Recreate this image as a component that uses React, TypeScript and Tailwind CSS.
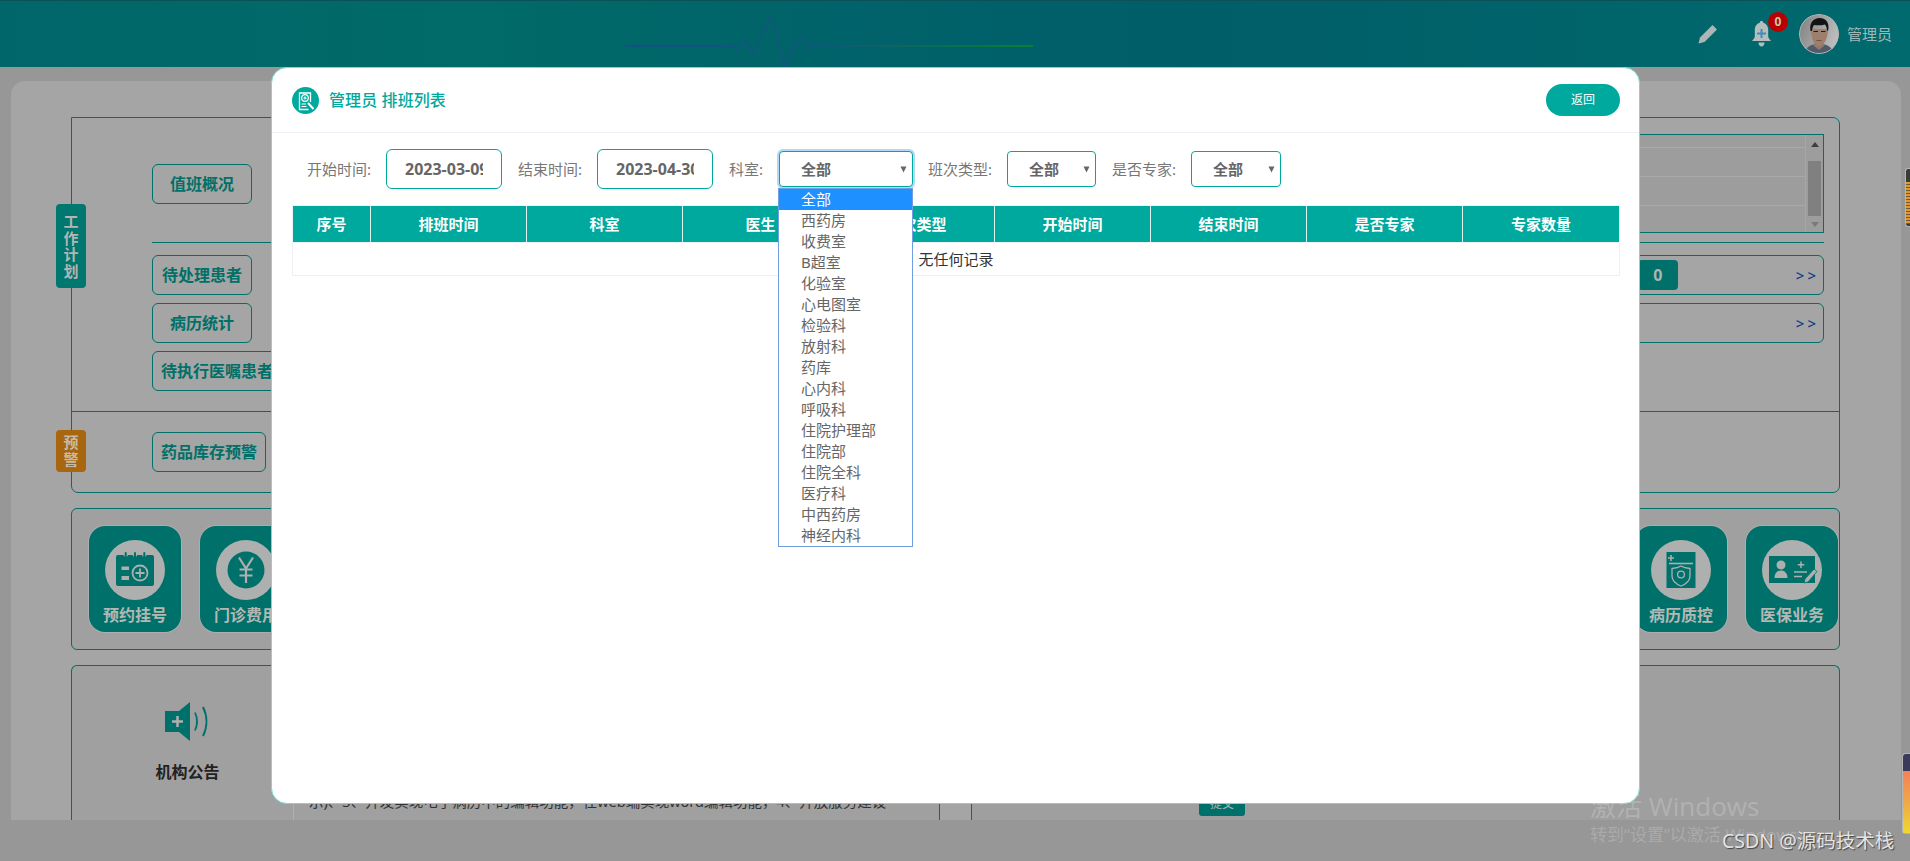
import React from "react";

const departments = ["全部","西药房","收费室","B超室","化验室","心电图室","检验科","放射科","药库","心内科","呼吸科","住院护理部","住院部","住院全科","医疗科","中西药房","神经内科"];
const columns = ["序号","排班时间","科室","医生","班次类型","开始时间","结束时间","是否专家","专家数量"];

function Caret() {
  return (
    <svg width="7" height="7" viewBox="0 0 7 7" className="absolute right-[5px] top-[14px]">
      <path d="M0.5 0.5H6.5L3.5 6.5Z" fill="#666" />
    </svg>
  );
}

function SideButton({ label, wide }: { label: string; wide?: boolean }) {
  return (
    <div className={`${wide ? "px-[8px] w-fit whitespace-nowrap" : "w-[100px]"} h-[40px] shrink-0 flex items-center justify-center rounded-[6px] border border-[#007068] text-[16px] font-bold text-[#007068]`}>
      {label}
    </div>
  );
}

function Calendar() {
  return (
    <svg viewBox="0 0 60 60" className="w-[60px] h-[60px]">
      <path d="M13 15h34a2 2 0 0 1 2 2v27a2 2 0 0 1-2 2H13a2 2 0 0 1-2-2V17a2 2 0 0 1 2-2z" fill="#00706a" />
      <g fill="#adb0ae"><circle cx="20.7" cy="14.5" r="2.4" /><circle cx="30" cy="14.5" r="2.4" /><circle cx="39.3" cy="14.5" r="2.4" /></g>
      <g fill="#00706a"><rect x="19.7" y="12" width="2" height="6" rx="1" /><rect x="29" y="12" width="2" height="6" rx="1" /><rect x="38.3" y="12" width="2" height="6" rx="1" /></g>
      <rect x="16.5" y="26.5" width="7.5" height="3.5" fill="#adb0ae" />
      <rect x="16.5" y="36" width="7.5" height="4" fill="#adb0ae" />
      <circle cx="35" cy="33" r="7.5" fill="none" stroke="#adb0ae" strokeWidth="1.8" />
      <path d="M35 28.5v9M30.5 33h9" stroke="#adb0ae" strokeWidth="1.8" />
    </svg>
  );
}

function Yen() {
  return (
    <svg viewBox="0 0 60 60" className="w-[60px] h-[60px]">
      <circle cx="30" cy="30" r="18.5" fill="#00706a" />
      <path d="M23 17.5l7 11 7-11M30 28.5V43M23.5 29.5h13M23.5 35.5h13" fill="none" stroke="#adb0ae" strokeWidth="2.2" />
    </svg>
  );
}

function ShieldDoc() {
  return (
    <svg viewBox="0 0 60 60" className="w-[60px] h-[60px]">
      <rect x="15.5" y="12" width="29" height="36" fill="#00706a" />
      <path d="M20 15v6M17 18h6" stroke="#adb0ae" strokeWidth="1.6" />
      <path d="M18 23.5h24" stroke="#adb0ae" strokeWidth="1.6" />
      <path d="M30 26c3 1.8 6 2.2 9 2.5v7.5c0 4.5-4 8-9 10-5-2-9-5.5-9-10v-7.5c3-.3 6-.7 9-2.5z" fill="none" stroke="#adb0ae" strokeWidth="1.3" />
      <circle cx="30" cy="34.5" r="3.4" fill="none" stroke="#adb0ae" strokeWidth="1.3" />
    </svg>
  );
}

function IdCard() {
  return (
    <svg viewBox="0 0 60 60" className="w-[60px] h-[60px]">
      <rect x="7" y="16" width="46" height="27" fill="#00706a" />
      <circle cx="19" cy="25" r="4.5" fill="#adb0ae" />
      <path d="M12.5 38c0-5 3-7.5 6.5-7.5s6.5 2.500 6.500 7.500z" fill="#adb0ae" />
      <path d="M39 21.500v6.500M35.800 24.800h6.500M32 32h13M32 36.500h8" stroke="#adb0ae" strokeWidth="1.5" />
      <path d="M42 43l1-4 9-10 3 2.500-9 10.500z" fill="#adb0ae" stroke="#00706a" strokeWidth="0.8" />
    </svg>
  );
}

function Tile({ label, children }: { label: string; children: React.ReactNode }) {
  return (
    <div className="w-[92px] h-[106px] shrink-0 rounded-[16px] bg-[#00706a] shadow-[0_0_0_1px_#adadad] flex flex-col items-center pt-[14px]">
      <div className="w-[60px] h-[60px] rounded-full bg-[#adb0ae]">{children}</div>
      <div className="mt-[3px] text-[16px] leading-[24px] font-bold text-[#b4b8b5] whitespace-nowrap">{label}</div>
    </div>
  );
}

function Speaker() {
  return (
    <svg width="45" height="39" viewBox="0 0 45 39">
      <path d="M0 9h14L25 0v39L14 30H0z" fill="#00706a" />
      <path d="M12.500 14v11M7 19.500h11" stroke="#adb0ae" strokeWidth="2.500" />
      <path d="M30 10.500c2.500 5.500 2.500 12.500 0 18" fill="none" stroke="#00706a" strokeWidth="1.800" />
      <path d="M38 5c4.500 9 4.500 20 0 29" fill="none" stroke="#00706a" strokeWidth="2" />
    </svg>
  );
}

function Pencil() {
  return (
    <svg width="20" height="20" viewBox="0 0 20 20">
      <path d="M0.500 19.500l1.500-6L14.500 1l4.500 4.500L6.500 18z" fill="#adb5b5" />
    </svg>
  );
}

function Bell() {
  return (
    <svg width="19" height="26" viewBox="0 0 19 26">
      <path d="M9.500 0c1.100 0 1.700.7 1.700 1.700 3.500 1 5 4 5 7.500v6c0 2 1.500 3 2.800 4.800H0c1.300-1.800 2.800-2.800 2.800-4.800v-6c0-3.500 1.500-6.500 5-7.500C7.800.7 8.400 0 9.500 0z" fill="#b5bdbd" />
      <path d="M6.500 21.500h6c0 2.500-1.500 4-3 4s-3-1.500-3-4z" fill="#b5bdbd" />
      <path d="M9.500 8v9M5 12.500h9" stroke="#3a8fbf" strokeWidth="2" />
    </svg>
  );
}

function Avatar() {
  return (
    <svg width="40" height="40" viewBox="0 0 40 40" className="rounded-full">
      <defs>
        <linearGradient id="avBg" x1="0" y1="0" x2="1" y2="0.4">
          <stop offset="0" stopColor="#7f7f7f" />
          <stop offset="1" stopColor="#bcbcbc" />
        </linearGradient>
      </defs>
      <circle cx="20" cy="20" r="20" fill="url(#avBg)" />
      <g className="blur-[0.4px]">
        <path d="M5 41c1-8 7-11 15-11s14 3 15 11z" fill="#4f5b6b" />
        <path d="M15 26h10v6l-5 4-5-4z" fill="#94786a" />
        <path d="M12 15c0 9 3 17 8 17s9-8 9-17z" fill="#9c7f6d" />
        <path d="M11.500 17c-1.500-8 3-13 9-13s10 4 8.800 12l-1.300 1c0-3-.8-5-2-6.500-3.500 1-7.500 1-11 .500-1.200 1.500-1.700 3.500-2 6z" fill="#141414" />
        <path d="M14.500 17.500h4.500M22 17.500h4.500" stroke="#1c1c1c" strokeWidth="1.200" />
        <path d="M17.500 26.500h5" stroke="#67493d" strokeWidth="0.800" />
      </g>
      <circle cx="20" cy="20" r="19.500" fill="none" stroke="#b4b4b4" />
    </svg>
  );
}

function TitleIcon() {
  return (
    <svg width="27" height="27" viewBox="0 0 27 27" className="shrink-0">
      <circle cx="13.500" cy="13.500" r="13.500" fill="#00a99d" />
      <path d="M18.500 15V6H7.500v16.500h9" fill="none" stroke="#fff" strokeWidth="1.300" />
      <circle cx="13" cy="11" r="3.300" fill="none" stroke="#fff" strokeWidth="1.200" />
      <path d="M13 9.300v3.400M11.300 11h3.400" stroke="#fff" strokeWidth="1" />
      <path d="M9.500 17h4.500M9.500 19.500h5" stroke="#fff" strokeWidth="1" />
      <path d="M16 16l5.500 6" stroke="#fff" strokeWidth="2" />
    </svg>
  );
}

function DateField({ value }: { value: string }) {
  return (
    <input
      readOnly
      value={value}
      className="w-[116px] h-[40px] shrink-0 pl-[18px] pr-[18px] rounded-[6px] border border-[#00a99d] text-[16px] font-bold text-[#666] bg-white outline-none"
    />
  );
}

function SelectBox({ width, focused }: { width: string; focused?: boolean }) {
  return (
    <div className={`${width} relative h-[36px] shrink-0 flex items-center pl-[21px] rounded-[4px] border border-[#00a99d] bg-white text-[15px] font-bold text-[#666] ${focused ? "shadow-[0_0_0_2px_#b2d8f5]" : ""}`}>
      全部
      <Caret />
    </div>
  );
}

export default function App() {
  return (
    <div className="relative w-[1910px] h-[861px] overflow-hidden bg-[#979797] font-['Noto_Sans','Noto_Sans_CJK_SC',sans-serif]">
      {/* top bar */}
      <header className="relative h-[67px] border-t border-[#0b5157] bg-[linear-gradient(90deg,#00666a_0%,#006b68_25%,#00626a_45%,#005e68_62%,#00626a_78%,#006a6e_100%)] flex items-center justify-end pr-[18px]">
        <svg width="420" height="60" viewBox="0 0 420 60" className="absolute left-[620px] top-[6px]">
          <defs>
            <linearGradient id="ecg" x1="0" y1="0" x2="1" y2="0">
              <stop offset="0" stopColor="#1b4a8c" />
              <stop offset="0.5" stopColor="#14557f" />
              <stop offset="1" stopColor="#0a8a20" />
            </linearGradient>
          </defs>
          <path d="M5 39H115l3 4 7-10 9 14 8-19 9-19 7 25 7 25 10-20 7-10 6 14 7-8 7 6 10-2H413" fill="none" stroke="url(#ecg)" strokeWidth="1.300" />
        </svg>
        <Pencil />
        <div className="relative ml-[34px] h-[26px]">
          <Bell />
          <span className="absolute left-[16px] top-[-9px] w-[20px] h-[20px] rounded-full bg-[#b80000] flex items-center justify-center text-[12px] font-bold text-[#c9c9a8]">0</span>
        </div>
        <div className="ml-[28px] mb-[1px] w-[40px] h-[40px]"><Avatar /></div>
        <span className="ml-[8px] text-[15px] text-[#9db8b8]">管理员</span>
      </header>

      {/* dimmed dashboard */}
      <main className="mt-[14px] ml-[11px] w-[1890px] h-[739px] overflow-hidden rounded-t-[14px] bg-[#a5a5a5] pt-[36px] pl-[60px]">
        <section className="relative w-[1769px] h-[376px] border border-[#007068] rounded-[7px] rounded-tl-none">
          <div className="relative h-[294px] border-b border-[#007068] pl-[80px] pr-[15px]">
            <div className="absolute left-[-16px] top-[86px] w-[30px] h-[84px] rounded-[4px] bg-[#00776f] px-[7px] flex items-center text-center text-[15px] leading-[16.5px] font-bold text-[#b5b5b5] break-all">
              工作计划
            </div>
            <div className="h-[125px] border-b border-[#007068] flex">
              <div className="mt-[46px]"><SideButton label="值班概况" /></div>
              <div className="ml-[50px] mt-[16px] h-[99px] flex-1 border border-[#007068] bg-[#9d9d9d] flex">
                <div className="flex-1">
                  <div className="h-[13px] border-b border-[#a9a9a9]" />
                  <div className="h-[29px] border-b border-[#a9a9a9]" />
                  <div className="h-[29px] border-b border-[#a9a9a9]" />
                </div>
                <div className="relative w-[18px] border-l border-[#a6a6a6]">
                  <svg width="8" height="5" viewBox="0 0 8 5" className="absolute left-[5px] top-[7px]"><path d="M0 5L4 0l4 5z" fill="#3e3e3e" /></svg>
                  <div className="absolute left-[2px] top-[26px] w-[13px] h-[55px] bg-[#808080]" />
                  <svg width="8" height="5" viewBox="0 0 8 5" className="absolute left-[5px] top-[87px]"><path d="M0 0L4 5l4-5z" fill="#7a7a7a" /></svg>
                </div>
              </div>
            </div>
            <div className="pt-[12px] flex flex-col gap-[8px]">
              <div className="flex">
                <SideButton label="待处理患者" />
                <div className="ml-[49px] h-[40px] flex-1 rounded-[6px] border border-[#007068] flex items-center justify-end gap-[118px] pr-[4px]">
                  <div className="w-[40px] h-[30px] rounded-[4px] bg-[#00706a] flex items-center justify-center text-[16px] font-bold text-[#adb5b0]">0</div>
                  <span className="text-[15px] font-medium tracking-[3px] text-[#0a3a8a]">&gt;&gt;</span>
                </div>
              </div>
              <div className="flex">
                <SideButton label="病历统计" />
                <div className="ml-[49px] h-[40px] flex-1 rounded-[6px] border border-[#007068] flex items-center justify-end pr-[4px]">
                  <span className="text-[15px] font-medium tracking-[3px] text-[#0a3a8a]">&gt;&gt;</span>
                </div>
              </div>
              <SideButton label="待执行医嘱患者" wide />
            </div>
          </div>
          <div className="relative h-[80px] pl-[80px] pt-[20px]">
            <div className="absolute left-[-16px] top-[18px] w-[30px] h-[42px] rounded-[4px] bg-[#a8660f] px-[7px] flex items-center text-center text-[15px] leading-[17px] font-bold text-[#c4bba9] break-all">
              预警
            </div>
            <SideButton label="药品库存预警" wide />
          </div>
        </section>

        <section className="mt-[15px] w-[1769px] h-[142px] border border-[#007068] rounded-[6px] bg-[#a0a0a0] pl-[17px] pr-[1px] pt-[17px] flex justify-between">
          <div className="flex gap-[19px]">
            <Tile label="预约挂号"><Calendar /></Tile>
            <Tile label="门诊费用"><Yen /></Tile>
          </div>
          <div className="flex gap-[19px]">
            <Tile label="病历质控"><ShieldDoc /></Tile>
            <Tile label="医保业务"><IdCard /></Tile>
          </div>
        </section>

        <section className="mt-[15px] w-[1769px] flex gap-[31px]">
          <div className="w-[869px] h-[200px] border-t border-x border-[#007068] rounded-t-[6px] bg-[#a0a0a0] flex">
            <div className="w-[222px] border-r border-[#b0b0b0] pl-[10px] pt-[36px] flex flex-col items-center">
              <Speaker />
              <div className="mt-[19px] text-[16px] leading-[24px] font-bold text-[#222]">机构公告</div>
            </div>
            <p className="ml-[15px] mt-[125px] text-[14.5px] leading-[20px] text-[#333] whitespace-nowrap">示)、3、开发实现电子病历中的编辑功能，在web端实现word编辑功能，4、开放服务建设</p>
          </div>
          <div className="w-[869px] h-[200px] border-t border-x border-[#007068] rounded-t-[6px] bg-[#9f9f9f]">
            <div className="ml-[227px] mt-[126px] w-[46px] h-[24px] rounded-[3px] bg-[#00706a] flex items-center justify-center text-[12px] text-[#adb5b0]">提交</div>
          </div>
        </section>
      </main>

      {/* screen-edge widgets */}
      <div className="absolute right-0 top-[168px] w-[5px] h-[59px] rounded-l-[3px] border-l border-y border-[#b5b5b5] bg-[#3a3a3a] pt-[13px]">
        <div className="h-[42px] bg-[repeating-linear-gradient(180deg,#e09a2c_0px,#e09a2c_2px,#6a5a3a_2px,#6a5a3a_3px)]" />
      </div>
      <div className="absolute right-0 top-[753px] w-[8px] h-[81px] rounded-l-[4px] border-l border-y border-[#b5b5b5] bg-[#3b3a5a] pt-[17px]">
        <div className="h-full bg-[linear-gradient(180deg,#f58058,#f0a848_50%,#eed830)]" />
      </div>

      {/* dialog */}
      <div className="absolute left-[271px] top-[67px] w-[1369px] h-[737px] rounded-[16px] border border-[#7fd8cf] bg-white">
        <div className="h-[65px] border-b border-[#eef0f8] flex items-center pl-[20px] pr-[19px]">
          <TitleIcon />
          <h1 className="ml-[10px] text-[16px] font-medium tracking-[0.1px] text-[#00a99d]">管理员 排班列表</h1>
          <button className="ml-auto w-[74px] h-[32px] rounded-full bg-[#00a99d] text-[12px] text-white">返回</button>
        </div>
        <div className="relative mt-[16px] ml-[35px] flex items-center gap-[15px] text-[15px] text-[#777]">
          <span className="w-[64px] whitespace-nowrap">开始时间:</span>
          <DateField value="2023-03-09" />
          <span className="w-[64px] ml-[1px] whitespace-nowrap">结束时间:</span>
          <DateField value="2023-04-30" />
          <span className="w-[34px] ml-[1px] whitespace-nowrap">科室:</span>
          <div className="relative ml-[1px]">
            <SelectBox width="w-[134px]" focused />
            <ul className="absolute left-[-1px] top-[37px] z-10 w-[135px] border border-[#6f9fe0] bg-white text-[15px] font-normal text-[#666]">
              {departments.map((d, i) => (
                <li key={d} className={`h-[21px] leading-[21px] pl-[22px] ${i === 0 ? "bg-[#1e90ff] text-white" : ""}`}>{d}</li>
              ))}
            </ul>
          </div>
          <span className="w-[64px] whitespace-nowrap">班次类型:</span>
          <SelectBox width="w-[89px]" />
          <span className="w-[64px] ml-[1px] whitespace-nowrap">是否专家:</span>
          <SelectBox width="w-[90px]" />
        </div>
        <div className="mt-[16px] ml-[20px] w-[1328px] border border-[#eef0f5]">
          <div className="grid grid-cols-[77px_repeat(7,156px)_157px] h-[36px] bg-[#00a99d]">
            {columns.map((c, i) => (
              <div key={c} className={`flex items-center justify-center text-[15px] font-bold text-white ${i > 0 ? "border-l border-[#dff3f1]" : ""}`}>{c}</div>
            ))}
          </div>
          <div className="h-[33px] border-t border-[#eef0f5] flex items-center justify-center text-[15px] text-[#333]">无任何记录</div>
        </div>
      </div>

      {/* desktop watermarks */}
      <div className="pointer-events-none absolute left-[1590px] top-[788px] text-[26px] leading-[36px] text-white/20 font-['Open_Sans','Noto_Sans_CJK_SC',sans-serif]">激活 Windows</div>
      <div className="pointer-events-none absolute left-[1590px] top-[823px] text-[17px] leading-[24px] text-white/20 font-['Open_Sans','Noto_Sans_CJK_SC',sans-serif]">转到“设置”以激活 Windows。</div>
      <div className="pointer-events-none absolute left-[1722px] top-[827px] text-[19.5px] leading-[28px] text-[#e4e4e4] [text-shadow:1px_1px_1px_#444]">CSDN @源码技术栈</div>
    </div>
  );
}
